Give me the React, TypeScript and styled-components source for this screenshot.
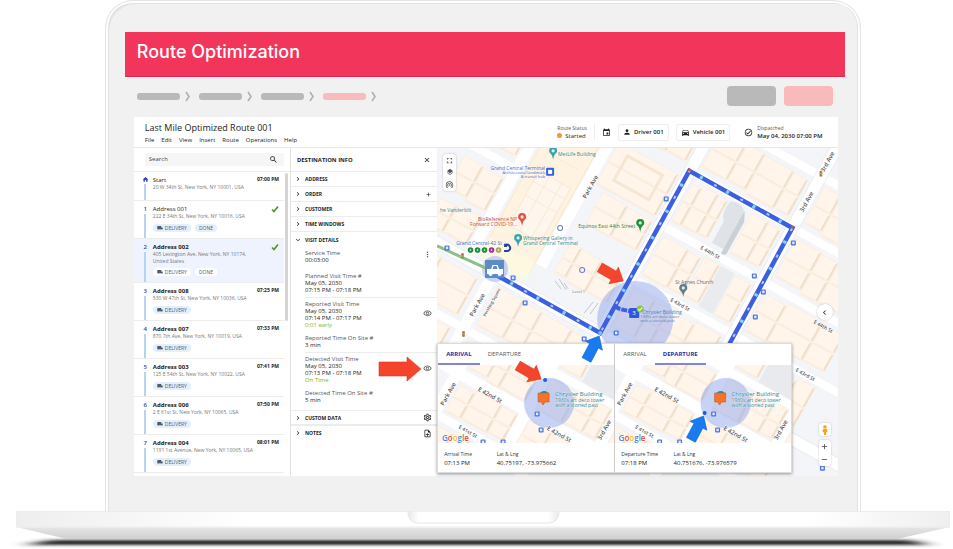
import React from "react";
import styled, { createGlobalStyle, css } from "styled-components";
import {
  MdSearch, MdClose, MdEvent, MdPerson, MdDirectionsCar, MdOutlineCheckCircle, MdLocalShipping,
  MdHome, MdChevronRight, MdExpandMore, MdAdd, MdRemove, MdMoreVert, MdOutlineVisibility,
  MdOutlineSettings, MdOutlineNoteAdd, MdFullscreen, MdLayers, MdWifiTethering, MdChevronLeft,
} from "react-icons/md";

const Global = createGlobalStyle`
  *, *::before, *::after { box-sizing: border-box; }
  body { margin: 0; background: #fff; color: #222; font-family: "Open Sans", "Noto Sans", sans-serif; overflow-x: hidden; }
  button, input { font: inherit; color: inherit; border: 0; background: none; padding: 0; margin: 0; }
  button { cursor: pointer; }
  svg { display: block; flex: none; }
  ol, ul, dl, dd, h1, h2, h3, p { margin: 0; padding: 0; list-style: none; font-weight: 400; }
`;

/* ---------- laptop ---------- */
const Lid = styled.div`
  margin: 0 9.7% 0 11%;
  padding: 31px 15px 35px 19px;
  background: #f1f1f1;
  border: 1px solid #e4e4e4;
  border-width: 1px 1px 0;
  border-radius: 28px 28px 0 0;
  box-shadow: inset 0 3px 0 -1px #fff, inset 2px 0 0 #fff, inset -2px 0 0 #fff, inset 3px 3px 0 #e2e2e2, inset -3px 0 0 #e2e2e2;
`;
const Banner = styled.header`
  display: flex;
  align-items: center;
  height: 45px;
  padding: 0 12px 5px;
  background: #f2365b;
  border-bottom: 1px solid #ea1f50;
  box-shadow: 0 1px 0 #fff;
`;
const BannerTitle = styled.h1`
  color: #fff;
  font: 500 18px/24px Inter, sans-serif;
`;
const ToolRow = styled.div`
  display: flex;
  align-items: center;
  justify-content: space-between;
  height: 40px;
  padding: 0 12px 2px;
`;
const Steps = styled.ol`
  display: flex;
  gap: 5px;
`;
const Step = styled.li<{ $active?: boolean }>`
  display: flex;
  align-items: center;
  gap: 5px;
  color: #b0b0b0;
  &::before {
    content: "";
    width: 43px;
    height: 7px;
    border-radius: 3px;
    background: ${(p) => (p.$active ? "#f8bcbd" : "#b9b9b9")};
  }
`;
const Blanks = styled.div`
  display: flex;
  gap: 8px;
`;
const Blank = styled.button<{ $pink?: boolean }>`
  width: 49px;
  height: 20px;
  border-radius: 4px;
  background: ${(p) => (p.$pink ? "#f8babb" : "#b9b9b9")};
`;

/* ---------- application ---------- */
const Panel = styled.main`
  margin: 0 7px 0 9px;
  background: #fff;
`;
const TopBar = styled.div`
  display: flex;
  align-items: center;
  justify-content: space-between;
  height: 30px;
  padding: 0 15px 0 11px;
`;
const RouteTitle = styled.h2`
  font-size: 9px;
  line-height: 12px;
  margin-top: 2px;
`;
const Menu = styled.nav`
  display: flex;
  gap: 7px;
  margin-top: 2px;
  font-size: 6px;
  line-height: 9px;
  font-weight: 500;
`;
const Facts = styled.div`
  display: flex;
  align-items: center;
  gap: 7px;
`;
const Fact = styled.div`
  font-size: 6px;
  line-height: 8px;
  small { display: block; font-size: 5px; line-height: 7px; color: #555; }
`;
const Status = styled.span`
  display: flex;
  align-items: center;
  gap: 3px;
  &::before { content: ""; width: 5px; height: 5px; border-radius: 50%; background: #f29a2e; }
`;
const Divider = styled.i`
  width: 1px;
  height: 18px;
  background: #eee;
`;
const Assign = styled.button`
  display: flex;
  align-items: center;
  gap: 3px;
  height: 17px;
  padding: 0 4px;
  border: 1px solid #efefef;
  border-radius: 2px;
  font-size: 6px;
  font-weight: 600;
`;
const Dispatch = styled.div`
  display: flex;
  align-items: center;
  gap: 4px;
  margin-left: 7px;
  b { font-weight: 600; }
`;
const Body = styled.div`
  display: grid;
  grid-template-columns: 157fr 146fr 400fr;
  border-top: 1px solid #e8e8e8;
`;

/* ---------- stop list ---------- */
const Stops = styled.section`
  border-right: 1px solid #e2e2e2;
  padding-bottom: 3px;
`;
const SearchBox = styled.label`
  display: flex;
  align-items: center;
  justify-content: space-between;
  height: 13px;
  margin: 5px 6px 5px 11px;
  padding: 0 6px 0 4px;
  background: #f6f6f6;
  font-size: 6px;
  input { width: 100px; line-height: 9px; outline: 0; &::placeholder { color: #444; opacity: 1; } }
`;
const StopList = styled.ol`
  position: relative;
  border-top: 1px solid #ececec;
  &::after {
    content: "";
    position: absolute;
    top: 1px;
    right: 2px;
    width: 3px;
    height: 148px;
    border-radius: 2px;
    background: #d4d4d4;
  }
`;
const Stop = styled.li<{ $selected?: boolean }>`
  display: grid;
  grid-template-columns: 9px 1fr auto;
  column-gap: 3px;
  margin-right: 6px;
  padding: 4px 5px 0 7px;
  border-bottom: 1px solid #ececec;
  background: ${(p) => (p.$selected ? "#eff3fe" : "none")};
`;
const Track = styled.div`
  display: flex;
  flex-direction: column;
  align-items: center;
  font-size: 6px;
  line-height: 8px;
  font-weight: 600;
  color: #3140c4;
  &::after { content: ""; flex: 1; width: 2px; margin-top: 1px; background: #b7d2f5; }
`;
const StopText = styled.div<{ $bold?: boolean; $start?: boolean }>`
  padding-bottom: ${(p) => (p.$start ? 9 : 6)}px;
  h3 { font-size: 6px; line-height: 8px; font-weight: ${(p) => (p.$bold ? 700 : 500)}; }
  p { font-size: 5px; line-height: 7px; color: #777; white-space: pre; }
`;
const Chips = styled.div<{ $tight?: boolean }>`
  display: flex;
  gap: 4px;
  margin-top: ${(p) => (p.$tight ? 3 : 4)}px;
`;
const Chip = styled.span<{ $white?: boolean }>`
  display: flex;
  align-items: center;
  gap: 2px;
  height: 8px;
  padding: 0 4px;
  border-radius: 4px;
  font-size: 5px;
  line-height: 8px;
  color: #4d5d70;
  background: ${(p) => (p.$white ? "#fff" : "#e5effa")};
`;
const StopTime = styled.time`
  font-size: 5px;
  line-height: 7px;
  font-weight: 700;
`;

/* ---------- destination info ---------- */
const Info = styled.section`
  font-size: 6px;
  line-height: 8px;
`;
const InfoHead = styled.div`
  display: flex;
  align-items: center;
  justify-content: space-between;
  height: 24px;
  padding: 0 6px;
  font-size: 5px;
  border-bottom: 1px solid #ececec;
  h3 { font-weight: 700; }
`;
const Fold = styled.button<{ $open?: boolean; $lead?: boolean }>`
  display: flex;
  align-items: center;
  gap: 3px;
  width: 100%;
  height: 15px;
  padding: 0 5px 0 3px;
  border-bottom: ${(p) => (p.$open ? "0" : "1px solid #ececec")};
  border-top: ${(p) => (p.$lead ? "1px solid #ececec" : "0")};
  font-size: 5px;
  font-weight: 700;
  text-align: left;
  span { flex: 1; }
`;
const Group = styled.dl<{ $line?: boolean }>`
  position: relative;
  margin-left: 14px;
  padding: 2px 0 ${(p) => (p.$line ? 3 : 6)}px;
  ${(p) => p.$line && css`border-bottom: 1px solid #ececec;`}
  dt { color: #555; line-height: 8px; }
  dd { line-height: 7px; }
  dd + dt { margin-top: 5px; }
`;
const Good = styled.dd`
  color: #7ab61c;
`;
const RowAction = styled.button<{ $top: number }>`
  position: absolute;
  right: 5px;
  top: ${(p) => p.$top}px;
  color: #555;
`;
const Pointer = styled.svg`
  position: absolute;
  right: 15px;
  top: 3px;
`;

/* ---------- map ---------- */
const MapPane = styled.section`
  position: relative;
  min-width: 0;
`;
const MapArt = styled.svg`
  position: absolute;
  inset: 0;
  width: 100%;
  height: 100%;
  font-family: "Open Sans", sans-serif;
  font-size: 5px;
`;
const Tools = styled.div<{ $place: "top" | "zoom" | "man" | "side" }>`
  position: absolute;
  display: flex;
  flex-direction: column;
  align-items: center;
  justify-content: space-around;
  background: #fff;
  border-radius: 3px;
  box-shadow: 0 0 2px rgba(0, 0, 0, 0.25);
  button { display: flex; }
  ${(p) => p.$place === "top" && css`left: 6px; top: 6px; width: 13px; height: 37px; color: #555;`}
  ${(p) => p.$place === "side" && css`right: 5px; top: 156px; width: 16px; height: 16px; border-radius: 50%;`}
  ${(p) => p.$place === "man" && css`right: 7px; bottom: 40px; width: 12px; height: 13px;`}
  ${(p) => p.$place === "zoom" && css`right: 7px; bottom: 10px; width: 12px; height: 26px; color: #444;`}
`;
const Cards = styled.div`
  position: absolute;
  left: 0;
  bottom: 3px;
  width: 88.5%;
  display: grid;
  grid-template-columns: 1fr 1fr;
  background: #fff;
  border: 1px solid #dcdcdc;
  box-shadow: 0 1px 3px rgba(0, 0, 0, 0.4);
`;
const Card = styled.article`
  min-width: 0;
  & + & { border-left: 1px solid #ccc; }
`;
const Tabs = styled.div`
  display: flex;
  height: 21px;
`;
const Tab = styled.button`
  padding: 0 8px;
  font-size: 6px;
  font-weight: 500;
  color: #555;
  border-bottom: 2px solid transparent;
  &[aria-selected="true"] { color: #2b2f9c; font-weight: 700; border-color: #8286cc; }
`;
const MiniArt = styled.svg`
  width: 100%;
  height: 78px;
  font-family: "Open Sans", sans-serif;
`;
const Reading = styled.dl`
  display: grid;
  grid-template-columns: 54fr 121fr;
  padding: 7px 0 4px 6px;
  dt { font-size: 5px; line-height: 8px; color: #333; }
  dd { font-size: 6px; line-height: 10px; }
`;

type Box = [number, number, number, number];

const Lot = ({ x, y, w, h }: { x: number; y: number; w: number; h: number }) => (
  <g>
    <rect x={x} y={y} width={w} height={h} fill="#fff5ea" stroke="#faecdb" strokeWidth=".6" />
    <path d={`M${x + w} ${y}l-2 2v${h - 3}l2-1z`} fill="#f0dfca" />
    <path d={`M${x} ${y + h}l2-2h${w - 3}l-1 2z`} fill="#fbeee0" />
  </g>
);

/* Splits a city block into lots, two rows deep, with uneven frontages. */
const Block = ({ box: [x, y, w, h], n, seed = 1 }: { box: Box; n: number; seed?: number }) => {
  const lots: React.ReactNode[] = [];
  [0, 1].forEach((row) => {
    let at = x;
    for (let i = 0; i < n; i++) {
      const share = 1 + (((i * 3 + row * 5 + seed * 7) % 5) - 2) * 0.17;
      const last = i === n - 1;
      const width = last ? x + w - at : Math.min((w / n) * share, x + w - at);
      const inset = (i * 5 + seed + row * 2) % 4;
      if (width > 5) {
        lots.push(<Lot key={`${row}-${i}`} x={at + 0.500} y={y + (row ? h / 2 : inset)} w={width - 1} h={h / 2 - (row ? inset : inset)} />);
      }
      at += width;
    }
  });
  return <g>{lots}</g>;
};

const BigMapBlocks: [Box, number, number][] = [
  [[8, -56, 100, 47], 4, 1],
  [[8, -117, 44, 46], 2, 2],
  [[54, -117, 18, 46], 1, 4],
  [[90, -117, 19, 46], 1, 2],
  [[8, -178, 40, 47], 3, 3],
  [[74, -178, 34, 47], 2, 4],
  [[8, -237, 100, 45], 4, 4],
  [[125, -237, 90, 45], 3, 5],
  [[125, -178, 90, 47], 3, 1],
  [[125, -117, 90, 46], 3, 3],
  [[125, -56, 90, 47], 3, 2],
  [[125, 9, 90, 46], 3, 6],
  [[-70, -66, 62, 38], 3, 5],
  [[-76, -178, 68, 50], 1, 2],
  [[-66, -126, 58, 38], 2, 6],
  [[-76, -250, 68, 60], 2, 2],
  [[-205, -90, 46, 40], 2, 1],
  [[-205, -44, 46, 34], 2, 3],
  [[-225, -170, 66, 60], 2, 4],
  [[-225, 9, 92, 46], 3, 1],
  [[-225, 68, 92, 46], 3, 2],
  [[-112, 9, 104, 46], 4, 4],
  [[-112, 68, 104, 46], 4, 3],
  [[8, 9, 100, 46], 3, 2],
];

const StreetSign = ({ x, y, a, children, size = 5 }: { x: number; y: number; a: number; children: string; size?: number }) => (
  <text transform={`translate(${x} ${y}) rotate(${a})`} textAnchor="middle" fontSize={size} fill="#555" fontWeight="600" stroke="#fff" strokeWidth="1" paintOrder="stroke">{children}</text>
);
const Pin = ({ x, y, c }: { x: number; y: number; c: string }) => (
  <g transform={`translate(${x} ${y})`}>
    <path d="M0 6C-1-1-4 0-4-3a4 4 0 0 1 8 0C4 0 1-1 0 6z" fill={c} />
    <circle cy="-3" r="1.6" fill="#fff" opacity=".85" />
  </g>
);
const Transit = ({ x, y }: { x: number; y: number }) => (
  <g transform={`translate(${x} ${y})`}>
    <rect x="-2.5" y="-2.5" width="5" height="5" rx="1" fill="#4f76dc" />
    <rect x="-1.2" y="-1.4" width="2.4" height="2.6" fill="#dfe8ff" />
  </g>
);
const Arrow = ({ x, y, a, c, s = 1 }: { x: number; y: number; a: number; c: string; s?: number }) => (
  <path transform={`translate(${x} ${y}) rotate(${a}) scale(${s})`} d="M0 0L-11-9.500V-5H-27V5H-11V9.500Z" fill={c} stroke={c === "#f4452c" ? "#d93a22" : "#1268cf"} strokeWidth=".6" />
);

const RouteMap = () => (
  <MapArt viewBox="437 148 400 328" preserveAspectRatio="xMidYMid slice" role="img" aria-label="Route map">
    <rect x="0" y="0" width="953" height="549" fill="#f4f5f8" />
    <g transform="translate(600 333) rotate(29)">
      {BigMapBlocks.map(([box, n, seed], i) => <Block key={i} box={box} n={n} seed={seed} />)}
      <rect x="-143" y="-172" width="52" height="156" fill="#fef3e0" stroke="#f9e9ca" />
      <rect x="-126" y="-210" width="34" height="46" fill="#fef6ec" stroke="#f6e8d6" />
      <path d="M-92-210v46l-4-3v-40zM-126-164h34l-4-4h-26z" fill="#f0dfca" />
      <rect x="-132" y="-112" width="36" height="62" fill="#fef6ec" stroke="#f6e8d6" />
      <path d="M-132-100h36M-132-84h36M-120-112v62M-106-112v62M-134-132h36" stroke="#f6e8d6" strokeWidth=".8" />
      <rect x="-143" y="-30" width="52" height="20" fill="#fff8e0" />
      <path d="M73-117h16v46h-16z" fill="#eaebee" />
      <path d="M-62-168h40v28h-40z" fill="none" stroke="#f6e6d2" strokeWidth="3" />
      <path d="M50-178q9-5 16 1l4 12v32H54v-24q-7-8-4-21z" fill="#dfe2e6" />
      <path d="M67-177l5 10v37l-5 4z" fill="#cbd0d6" />
      <g stroke="#fff" strokeWidth="11" fill="none">
        <path d="M0 260V-290M117 260V-290M-230 0H280M-84-30V-290M-122 0V200M-152 0V-290" />
        <path d="M0-63H280M0-124H280M0-185H280M-84-185H-60M0-244H280M-230-102H-152M-230 62H280" strokeWidth="8" />
      </g>
      <path d="M-6 0V-290M6 0V-290M111 200V-290M123 200V-290M-230-6H280M-230 6H280" stroke="#e6e9ee" strokeWidth=".6" />
    </g>

    <circle cx="635" cy="319" r="38" fill="#8fa5ec" opacity=".5" />
    <circle cx="495" cy="269" r="13" fill="#a4b2f0" opacity=".55" />
    <path d="M437 246L494 272" stroke="#8bbf83" strokeWidth="3" />
    <g fill="none">
      <path d="M498 276L600 333L689 171L792 228L728 346" stroke="#3b5ee3" strokeWidth="4.500" />
      <path d="M615 306C620 311 626 309 634 313" stroke="#3b5ee3" strokeWidth="4" strokeDasharray="6 1" />
      <path d="M498 276L600 333L689 171L792 228L728 346" stroke="#84d3f5" strokeWidth="3.500" strokeDasharray="3 27" strokeDashoffset="-14" />
      <path d="M498 276L600 333L689 171L792 228L728 346" stroke="#b9c6f6" strokeWidth="2" strokeDasharray="3 27" />
    </g>
    <circle cx="600" cy="333" r="2" fill="#71c7ef" />
    <circle cx="689" cy="170" r="1.500" fill="#c2554e" />
    <circle cx="792" cy="227" r="1.500" fill="#c2554e" />

    <rect x="485" y="260" width="19" height="18" fill="#5b8cc4" />
    <path d="M487 269h4l1.500-4h5l1.500 4h4v5h-1.500a2 2 0 0 1-4 0h-5a2 2 0 0 1-4 0H487z" fill="#fff" />
    <path d="M492.500 269l1-3h3l1 3z" fill="#5b8cc4" />

    {[[513, 278], [525, 303], [584, 339], [616, 333], [666, 199], [754, 276], [793, 243], [763, 292], [755, 317], [447, 248], [822, 468]].map(([x, y]) => <Transit key={`${x}-${y}`} x={x} y={y} />)}
    <rect x="629" y="308" width="10" height="10" rx="1" fill="#2d57dd" />
    <text x="632" y="315" fill="#fff" fontSize="6">3</text>
    <circle cx="640" cy="309" r="3.500" fill="#8cc63f" />
    <path d="M638 309l1.500 1.500 2.500-3" stroke="#fff" fill="none" />
    <g fill="#4a83bd"><text x="642" y="314">Chrysler Building</text><text x="640" y="318" fontSize="4">1930s art deco tower</text><text x="640" y="322" fontSize="4">with a storied past</text></g>

    <Pin x={553} y={154} c="#3aa3b0" /><text x="558" y="156" fill="#3a8ea0">MetLife Building</text>
    <rect x="546" y="168" width="8" height="8" rx="1" fill="#3363d8" /><rect x="548" y="170" width="4" height="4" fill="#fff" />
    <g fill="#416fd0" textAnchor="end"><text x="545" y="170">Grand Central Terminal</text><text x="545" y="174" fontSize="4">Architectural landmark</text><text x="545" y="178" fontSize="4">&amp; transit hub</text></g>
    <Pin x={522} y={220} c="#d9534a" />
    <g fill="#c9483e" textAnchor="end"><text x="517" y="221">BioReference NP</text><text x="517" y="226">Forward COVID-19...</text></g>
    <Pin x={518} y={241} c="#3aa3b0" />
    <g fill="#2f8f9c"><text x="523" y="240">Whispering Gallery in</text><text x="523" y="245">Grand Central Terminal</text><text x="440" y="212">he Vanderbilt</text></g>
    <text x="502" y="245" textAnchor="end" fill="#416fd0">Grand Central-42 St</text>
    {["#1f8b3b", "#1f8b3b", "#1f8b3b", "#a52da5", "#a8a86b"].map((c, i) => (
      <g key={i}><circle cx={470.500 + i * 7} cy="250" r="2.800" fill={c} /><circle cx={470.500 + i * 7} cy="250" r=".8" fill="#fff" /></g>
    ))}
    <path d="M504 245c7-2 8 6 3 6h-3M504 246h3" stroke="#2240a8" strokeWidth="2" fill="none" />
    <text x="635" y="228" textAnchor="end" fill="#2c8a40">Equinox East 44th Street</text><Pin x={640} y={226} c="#1d9137" />
    <text x="675" y="284" fill="#5c6f7a">St Agnes Church</text><Pin x={683} y={291} c="#5d7d8b" />
    <g fill="none" stroke="#6d7ccc"><circle cx="560" cy="228" r="2.500" /><circle cx="582" cy="270" r="2.500" /></g>
    <g stroke="#b4b9c2" strokeWidth=".8"><path d="M555 281l6 8M559 279l7 11M564 283l4 6M593 302l-9 11M598 303l-8 11" /></g>
    <text x="572" y="293" fill="#777" fontSize="4">Level 1</text>
    <StreetSign x={592} y={188} a={-61} size={6}>Park Ave</StreetSign>
    <StreetSign x={479} y={306} a={-61} size={6}>Park Ave</StreetSign>
    <StreetSign x={493} y={303} a={-61} size={4}>Pershing Square</StreetSign>
    <StreetSign x={808} y={203} a={-61} size={6}>3rd Ave</StreetSign>
    <StreetSign x={829} y={163} a={-61} size={6}>3rd Ave</StreetSign>
    <StreetSign x={709} y={254} a={29}>E 44th St</StreetSign>
    <StreetSign x={679} y={306} a={29}>E 43rd St</StreetSign>
    <StreetSign x={804} y={376} a={29}>E 43rd St</StreetSign>
    <StreetSign x={822} y={328} a={29}>E 44th St</StreetSign>
    {[[462, 256], [463, 334], [820, 174]].map(([x, y]) => (
      <g key={`${x}-${y}`}><rect x={x - 1} y={y - 3} width="3" height="6" rx="1" fill="#bda96b" /><circle cx={x + 0.500} cy={y - 1.500} r="1" fill="#d9534a" /><circle cx={x + 0.500} cy={y + 1.500} r="1" fill="#3fa45b" /></g>
    ))}
  </MapArt>
);

const MapPointers = styled(MapArt)`
  pointer-events: none;
`;

const MiniMap = ({ departure }: { departure?: boolean }) => (
  <MiniArt viewBox="0 0 176 78" preserveAspectRatio="xMidYMid slice" role="img" aria-label={departure ? "Departure location" : "Arrival location"}>
    <rect width="176" height="78" fill="#f4f5f8" />
    <g transform="translate(89 46) rotate(29)">
      <Block box={[6, -42, 68, 36]} n={3} seed={2} />
      <Block box={[-72, -42, 66, 36]} n={3} seed={1} />
      <Block box={[-72, 7, 66, 34]} n={3} seed={3} />
      <Block box={[6, 7, 68, 34]} n={3} seed={4} />
      <Block box={[86, -42, 50, 36]} n={2} seed={2} />
      <Block box={[86, -96, 50, 44]} n={2} seed={3} />
      <Block box={[-72, -96, 66, 44]} n={3} seed={5} />
      <Block box={[6, -96, 26, 44]} n={1} seed={4} />
      <rect x="34" y="-94" width="38" height="42" fill="#e8eaed" />
      <Block box={[-120, -42, 34, 36]} n={2} seed={2} />
      <Block box={[-120, 53, 114, 40]} n={4} seed={2} />
      <path d="M0 120V-120M80 120V-120M-80 120V-120M-140 0H160" stroke="#fff" strokeWidth="11" />
      <path d="M-140 47H160M-140-47H160" stroke="#fff" strokeWidth="8" />
    </g>
    <circle cx="111" cy="38" r="25" fill="#8fa5ec" opacity=".5" />
    <circle cx="106" cy="31" r="5" fill="#2b8a9e" />
    <path d="M100 28h11v9h-4l-2 3-2-3h-3z" fill="#f2742c" stroke="#c85b1c" strokeWidth=".6" />
    <g fill="#2b8a9e" stroke="#fff" strokeWidth=".7" strokeOpacity=".5" paintOrder="stroke"><text x="117" y="31" fontSize="6">Chrysler Building</text><text x="117" y="37" fontSize="5">1930s art deco tower</text><text x="117" y="42" fontSize="5">with a storied past</text></g>
    <Transit x={99} y={49} /><Transit x={103} y={65} /><Transit x={45} y={77} /><Transit x={65} y={77} />
    <StreetSign x={51} y={32} a={29} size={6}>E 42nd St</StreetSign>
    <StreetSign x={120} y={71} a={29} size={6}>E 42nd St</StreetSign>
    <StreetSign x={29} y={68} a={29}>E 41st St</StreetSign>
    <StreetSign x={12} y={30} a={-61} size={6}>Park Ave</StreetSign>
    <StreetSign x={168} y={66} a={-61} size={6}>3rd Ave</StreetSign>
    <text x="4" y="76" fontSize="8" fontWeight="600" stroke="#fff" strokeWidth="1" paintOrder="stroke">
      <tspan fill="#4285f4">G</tspan><tspan fill="#ea4335">o</tspan><tspan fill="#fbbc05">o</tspan><tspan fill="#4285f4">g</tspan><tspan fill="#34a853">l</tspan><tspan fill="#ea4335">e</tspan>
    </text>
    {departure ? (
      <><circle cx="90" cy="48" r="2" fill="#1d5be0" /><Arrow x={89} y={51} a={-62} c="#1a7af0" /></>
    ) : (
      <circle cx="107" cy="15" r="2" fill="#1d5be0" />
    )}
  </MiniArt>
);

const LocationCard = ({ departure, time, coords }: { departure?: boolean; time: string; coords: string }) => (
  <Card>
    <Tabs role="tablist">
      <Tab role="tab" aria-selected={!departure}>ARRIVAL</Tab>
      <Tab role="tab" aria-selected={!!departure}>DEPARTURE</Tab>
    </Tabs>
    <MiniMap departure={departure} />
    <Reading>
      <div><dt>{departure ? "Departure Time" : "Arrival Time"}</dt><dd>{time}</dd></div>
      <div><dt>Lat &amp; Lng</dt><dd>{coords}</dd></div>
    </Reading>
  </Card>
);

const DoneMark = () => (
  <svg width="8" height="8" viewBox="0 0 8 8" role="img" aria-label="Done">
    <path d="M1 4.500L3 6.500L7 1.500" fill="none" stroke="#4c9a12" strokeWidth="1.600" />
  </svg>
);

const stops = [
  { name: "Start", address: "20 W 34th St, New York, NY 10001, USA", time: "07:00 PM" },
  { name: "Address 001", address: "222 E 34th St, New York, NY 10016, USA", done: true },
  { name: "Address 002", address: "405 Lexington Ave, New York, NY 10174,\nUnited States", done: true, selected: true },
  { name: "Address 008", address: "530 W 47th St, New York, NY 10036, USA", time: "07:25 PM" },
  { name: "Address 007", address: "870 7th Ave, New York, NY 10019, USA", time: "07:33 PM" },
  { name: "Address 003", address: "125 E 54th St, New York, NY 10022, USA", time: "07:41 PM" },
  { name: "Address 006", address: "2 E 61st St, New York, NY 10065, USA", time: "07:50 PM" },
  { name: "Address 004", address: "1191 1st Avenue, New York, NY 10065, USA", time: "08:01 PM" },
];

export default function App() {
  return (
    <>
      <Global />
      <Lid>
        <Banner><BannerTitle>Route Optimization</BannerTitle></Banner>
        <ToolRow>
          <Steps aria-label="Progress">
            {[0, 1, 2, 3].map((i) => (
              <Step key={i} $active={i === 3}>
                <svg width="9" height="11" viewBox="0 0 9 11" fill="none" stroke="currentColor" strokeWidth="1.600"><path d="M1 1L4 5.500L1 10" /></svg>
              </Step>
            ))}
          </Steps>
          <Blanks><Blank aria-label="Cancel" /><Blank $pink aria-label="Save" /></Blanks>
        </ToolRow>
        <Panel>
          <TopBar>
            <div>
              <RouteTitle>Last Mile Optimized Route 001</RouteTitle>
              <Menu>{["File", "Edit", "View", "Insert", "Route", "Operations", "Help"].map((m) => <button key={m}>{m}</button>)}</Menu>
            </div>
            <Facts>
              <Fact><small>Route Status</small><Status>Started</Status></Fact>
              <Divider />
              <button aria-label="Schedule"><MdEvent size={9} /></button>
              <Assign><MdPerson size={8} />Driver 001</Assign>
              <Assign><MdDirectionsCar size={9} />Vehicle 001</Assign>
              <Dispatch><MdOutlineCheckCircle size={9} /><Fact><small>Dispatched</small><b>May 04, 2030 07:00 PM</b></Fact></Dispatch>
            </Facts>
          </TopBar>
          <Body>
            <Stops>
              <SearchBox><input aria-label="Search" placeholder="Search" /><MdSearch size={9} /></SearchBox>
              <StopList>
                {stops.map((s, i) => (
                  <Stop key={s.name} $selected={s.selected}>
                    <Track>{i === 0 ? <MdHome size={7} /> : i}</Track>
                    <StopText $bold={i > 1} $start={i === 0}>
                      <h3>{s.name}</h3>
                      <p>{s.address}</p>
                      {i > 0 && (
                        <Chips $tight={s.selected}>
                          <Chip $white={s.selected}><MdLocalShipping size={6} />DELIVERY</Chip>
                          {s.done && <Chip $white={s.selected}>DONE</Chip>}
                        </Chips>
                      )}
                    </StopText>
                    {s.done ? <DoneMark /> : <StopTime>{s.time}</StopTime>}
                  </Stop>
                ))}
              </StopList>
            </Stops>
            <Info>
              <InfoHead><h3>DESTINATION INFO</h3><button aria-label="Close"><MdClose size={8} /></button></InfoHead>
              <Fold><MdChevronRight size={8} /><span>ADDRESS</span></Fold>
              <Fold><MdChevronRight size={8} /><span>ORDER</span><MdAdd size={7} /></Fold>
              <Fold><MdChevronRight size={8} /><span>CUSTOMER</span></Fold>
              <Fold><MdChevronRight size={8} /><span>TIME WINDOWS</span></Fold>
              <Fold $open aria-expanded><MdExpandMore size={8} /><span>VISIT DETAILS</span></Fold>
              <Group>
                <dt>Service Time</dt><dd>00:03:00</dd>
                <RowAction $top={3} aria-label="More"><MdMoreVert size={9} /></RowAction>
              </Group>
              <Group $line>
                <dt>Planned Visit Time #</dt><dd>May 05, 2030</dd><dd>07:15 PM - 07:18 PM</dd>
              </Group>
              <Group $line>
                <dt>Reported Visit Time</dt><dd>May 05, 2030</dd><dd>07:14 PM - 07:17 PM</dd><Good>0:01 early</Good>
                <dt>Reported Time On Site #</dt><dd>3 min</dd>
                <RowAction $top={11} aria-label="Show reported visit"><MdOutlineVisibility size={9} /></RowAction>
              </Group>
              <Group>
                <dt>Detected Visit Time</dt><dd>May 05, 2030</dd><dd>07:13 PM - 07:18 PM</dd><Good>On Time</Good>
                <dt>Detected Time On Site #</dt><dd>5 min</dd>
                <RowAction $top={11} aria-label="Show detected visit"><MdOutlineVisibility size={9} /></RowAction>
                <Pointer width="44" height="26" viewBox="-44 -13 44 26" aria-hidden>
                  <path d="M-1 0L-15-12V-7H-43V7H-15V12Z" fill="#f4452c" stroke="#d93a22" strokeWidth=".6" />
                </Pointer>
              </Group>
              <Fold $lead><MdChevronRight size={8} /><span>CUSTOM DATA</span><MdOutlineSettings size={9} /></Fold>
              <Fold $lead $open><MdChevronRight size={8} /><span>NOTES</span><MdOutlineNoteAdd size={9} /></Fold>
            </Info>
            <MapPane>
              <RouteMap />
              <Tools $place="top">
                <button aria-label="Full screen"><MdFullscreen size={9} /></button>
                <button aria-label="Layers"><MdLayers size={8} /></button>
                <button aria-label="Live signal"><MdWifiTethering size={9} /></button>
              </Tools>
              <Tools $place="side"><button aria-label="Collapse"><MdChevronLeft size={9} /></button></Tools>
              <Tools $place="man">
                <button aria-label="Street view">
                  <svg width="6" height="10" viewBox="0 0 6 10" fill="#f0a818"><circle cx="3" cy="2" r="1.800" /><path d="M1 4h4l.5 3H4.300L4 10H2L1.700 7H.5z" /></svg>
                </button>
              </Tools>
              <Tools $place="zoom">
                <button aria-label="Zoom in"><MdAdd size={9} /></button>
                <button aria-label="Zoom out"><MdRemove size={9} /></button>
              </Tools>
              <Cards>
                <LocationCard time="07:13 PM" coords="40.75197, -73.975662" />
                <LocationCard departure time="07:18 PM" coords="40.751676, -73.976579" />
              </Cards>
              <MapPointers viewBox="437 148 400 328" preserveAspectRatio="xMidYMid slice" aria-hidden>
                <Arrow x={623} y={281} a={30} c="#f4452c" />
                <Arrow x={599} y={336} a={-62} c="#1a7af0" />
                <Arrow x={541} y={379} a={30} c="#f4452c" />
              </MapPointers>
            </MapPane>
          </Body>
        </Panel>
      </Lid>
      <svg width="100%" viewBox="0 0 953 38" aria-hidden>
        <defs>
          <linearGradient id="deck" x1="0" x2="1"><stop offset="0" stopColor="#eee" /><stop offset=".25" stopColor="#fff" /><stop offset=".85" stopColor="#fff" /><stop offset="1" stopColor="#efefef" /></linearGradient>
          <linearGradient id="under" x1="0" x2="0" y1="0" y2="1"><stop offset="0" stopColor="#e6e6e6" /><stop offset="1" stopColor="#cfcfcf" /></linearGradient>
          <linearGradient id="notch" x1="0" x2="1"><stop offset="0" stopColor="#e9e9e9" /><stop offset=".07" stopColor="#fff" /><stop offset=".93" stopColor="#fff" /><stop offset="1" stopColor="#e9e9e9" /></linearGradient>
          <filter id="soft" x="-5%" width="110%" y="-100%" height="300%"><feGaussianBlur stdDeviation="9 1.500" /></filter>
        </defs>
        <path d="M50 29H910L930 34H25z" fill="#222" filter="url(#soft)" />
        <path d="M16 16H950L897 28H67z" fill="url(#under)" />
        <path d="M16 0H950V16.500H16z" fill="url(#deck)" />
        <path d="M16 .5H950M16.500 0V16H949.500V0" stroke="#ececec" fill="none" />
        <path d="M408 0H559C559 8 555 12 548 12H419C412 12 408 8 408 0z" fill="url(#notch)" stroke="#e6e6e6" />
      </svg>
    </>
  );
}
